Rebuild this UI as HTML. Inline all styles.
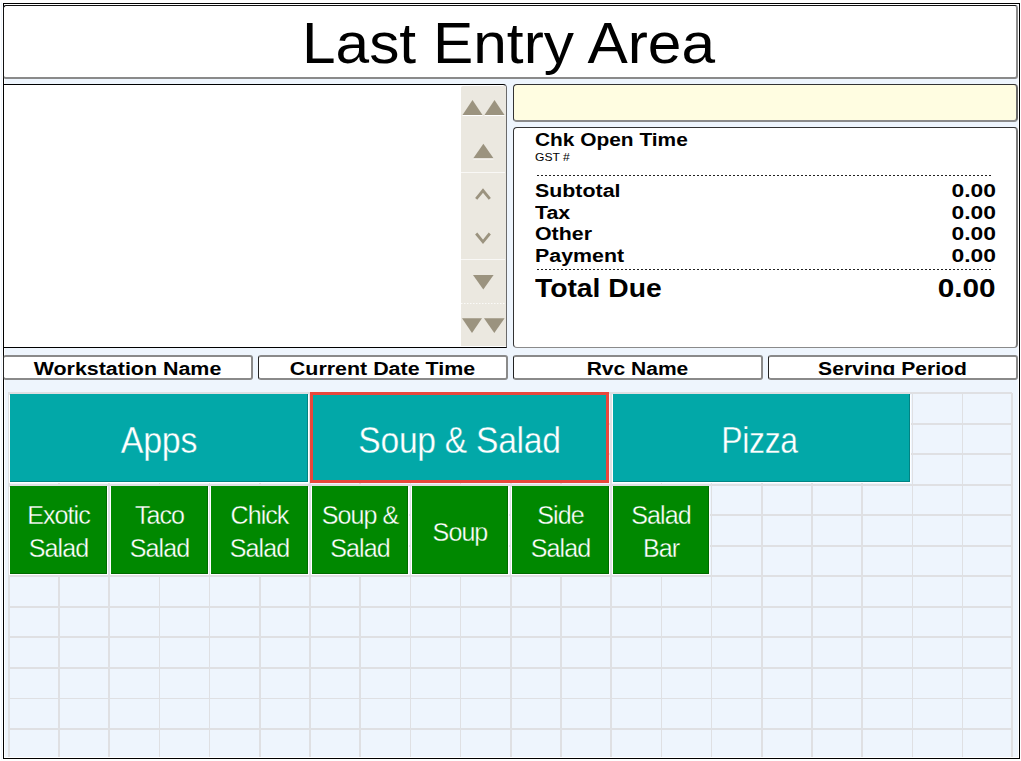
<!DOCTYPE html>
<html><head><meta charset="utf-8">
<style>
html,body{margin:0;padding:0;width:1021px;height:761px;overflow:hidden;background:#fff;}
body{position:relative;font-family:"Liberation Sans",sans-serif;}
.a{position:absolute;box-sizing:border-box;}
.t{position:absolute;white-space:nowrap;}
.gl{position:absolute;background:#dfe0e3;}
.btn{position:absolute;box-shadow:1px 1px 0 #fff,-1px 1px 0 #fff,inset -1px -1px 0 rgba(0,0,0,0.22);overflow:hidden;}
.dot{position:absolute;height:1px;background-image:linear-gradient(to right,#222 0,#222 2px,transparent 2px);background-size:4px 1px;}
</style></head><body>

<div class="a" style="left:3px;top:3px;width:1017px;height:756px;border:1px solid #000;background:#eef5fd;box-shadow:inset 0 0 0 1px #fff;"></div>
<div class="a" style="left:1px;top:2px;width:1px;height:758px;background:#eef5fd;"></div>
<div class="a" style="left:3px;top:5px;width:1015px;height:74px;background:#fff;border-top:1px solid #111;border-left:1px solid #111;border-right:2px solid #8a8a8a;border-bottom:2px solid #8a8a8a;border-radius:3px;"></div>
<div class="t" style="left:0px;top:15.4px;width:1021px;font-size:57px;line-height:57px;transform:scaleX(1.06);transform-origin:50% 0;text-align:center;color:#000;left:-2.0px;">Last Entry Area</div>
<div class="a" style="left:3px;top:84px;width:504px;height:264px;background:#fff;border:1px solid #000;border-right-color:#6a6a6a;border-radius:0 4px 0 0;"></div>
<div class="a" style="left:461px;top:86px;width:45px;height:260px;background:#ebe8e0;border-radius:2px 2px 0 0;"></div>
<svg class="a" style="left:455px;top:80px" width="60" height="280" viewBox="455 80 60 280">
 <g fill="#9b937f">
  <polygon points="462.5,115 472.5,100 482.5,115"/>
  <polygon points="484.5,115 494.5,100 504.5,115"/>
  <polygon points="473.3,158.3 483.4,143.8 493.5,158.3"/>
  <polygon points="473,275 483.3,289.5 493.6,275"/>
  <polygon points="462,318.3 472,333 482,318.3"/>
  <polygon points="484,318.3 494.3,333 504.6,318.3"/>
 </g>
 <g fill="none" stroke="#9b937f" stroke-width="2.8">
  <polyline points="476.2,198.8 483,190.5 489.8,198.8"/>
  <polyline points="476.2,233.5 483,241.8 489.8,233.5"/>
 </g>
 <g stroke="#fff" stroke-width="1">
  <line x1="462.5" y1="115.5" x2="482.5" y2="115.5"/>
  <line x1="484.5" y1="115.5" x2="504.5" y2="115.5"/>
  <line x1="473.3" y1="159" x2="493.5" y2="159" stroke-opacity="0.8"/>
  <line x1="461" y1="172.5" x2="505" y2="172.5" stroke-opacity="0.7"/>
  <line x1="461" y1="259.5" x2="505" y2="259.5" stroke-opacity="0.7"/>
  <line x1="461" y1="303.5" x2="505" y2="303.5" stroke-dasharray="1.5 1.5" stroke-opacity="0.8"/>
 </g>
</svg>
<div class="a" style="left:513px;top:84px;width:505px;height:38px;background:#fffde1;border-top:1px solid #333;border-left:1px solid #333;border-right:2px solid #6a6a6a;border-bottom:2px solid #8a8a8a;border-radius:4px;"></div>
<div class="a" style="left:513px;top:127px;width:505px;height:221px;background:#fff;border-top:1px solid #333;border-left:1px solid #333;border-right:2px solid #7a7a7a;border-bottom:1px solid #8a8a8a;border-radius:4px;"></div>
<div class="t" style="left:535px;top:130.75px;font-size:18px;line-height:18px;font-weight:bold;transform:scaleX(1.16);transform-origin:0 0;text-align:left;color:#000;">Chk Open Time</div>
<div class="t" style="left:535px;top:151.9px;font-size:11px;line-height:11px;transform:scaleX(1.1);transform-origin:0 0;text-align:left;color:#000;">GST #</div>
<div class="t" style="left:535px;top:181.7px;font-size:18px;line-height:18px;font-weight:bold;transform:scaleX(1.187);transform-origin:0 0;text-align:left;color:#000;">Subtotal</div>
<div class="t" style="left:535px;top:203.9px;font-size:18px;line-height:18px;font-weight:bold;transform:scaleX(1.187);transform-origin:0 0;text-align:left;color:#000;">Tax</div>
<div class="t" style="left:535px;top:224.6px;font-size:18px;line-height:18px;font-weight:bold;transform:scaleX(1.187);transform-origin:0 0;text-align:left;color:#000;">Other</div>
<div class="t" style="left:535px;top:246.8px;font-size:18px;line-height:18px;font-weight:bold;transform:scaleX(1.187);transform-origin:0 0;text-align:left;color:#000;">Payment</div>
<div class="t" style="left:535px;top:275.5px;font-size:25px;line-height:25px;font-weight:bold;transform:scaleX(1.13);transform-origin:0 0;text-align:left;color:#000;">Total Due</div>
<div class="t" style="right:25px;top:181.7px;font-size:18px;line-height:18px;font-weight:bold;transform:scaleX(1.27);transform-origin:100% 0;text-align:right;color:#000;">0.00</div>
<div class="t" style="right:25px;top:203.9px;font-size:18px;line-height:18px;font-weight:bold;transform:scaleX(1.27);transform-origin:100% 0;text-align:right;color:#000;">0.00</div>
<div class="t" style="right:25px;top:224.6px;font-size:18px;line-height:18px;font-weight:bold;transform:scaleX(1.27);transform-origin:100% 0;text-align:right;color:#000;">0.00</div>
<div class="t" style="right:25px;top:246.8px;font-size:18px;line-height:18px;font-weight:bold;transform:scaleX(1.27);transform-origin:100% 0;text-align:right;color:#000;">0.00</div>
<div class="t" style="right:25px;top:275.5px;font-size:25px;line-height:25px;font-weight:bold;transform:scaleX(1.19);transform-origin:100% 0;text-align:right;color:#000;">0.00</div>
<div class="dot" style="left:537px;top:175px;width:456px"></div>
<div class="dot" style="left:537px;top:269px;width:456px"></div>
<div class="a" style="left:3px;top:355px;width:250px;height:25px;background:#fff;border-top:2px solid #8a8a8a;border-left:1px solid #222;border-right:2px solid #8a8a8a;border-bottom:2px solid #8a8a8a;border-radius:3px;overflow:hidden;"><div style="position:absolute;left:0;top:0;width:247px;height:18.3px;overflow:hidden"><div class="t" style="left:0px;top:3.0px;width:247px;font-size:18px;line-height:18px;font-weight:bold;transform:scaleX(1.19);transform-origin:50% 0;text-align:center;color:#000;">Workstation Name</div></div></div>
<div class="a" style="left:258px;top:355px;width:250px;height:25px;background:#fff;border-top:2px solid #8a8a8a;border-left:1px solid #222;border-right:2px solid #8a8a8a;border-bottom:2px solid #8a8a8a;border-radius:3px;overflow:hidden;"><div style="position:absolute;left:0;top:0;width:247px;height:18.3px;overflow:hidden"><div class="t" style="left:0px;top:3.0px;width:247px;font-size:18px;line-height:18px;font-weight:bold;transform:scaleX(1.19);transform-origin:50% 0;text-align:center;color:#000;">Current Date Time</div></div></div>
<div class="a" style="left:513px;top:355px;width:250px;height:25px;background:#fff;border-top:2px solid #8a8a8a;border-left:1px solid #222;border-right:2px solid #8a8a8a;border-bottom:2px solid #8a8a8a;border-radius:3px;overflow:hidden;"><div style="position:absolute;left:0;top:0;width:247px;height:18.3px;overflow:hidden"><div class="t" style="left:0px;top:3.0px;width:247px;font-size:18px;line-height:18px;font-weight:bold;transform:scaleX(1.167);transform-origin:50% 0;text-align:center;color:#000;">Rvc Name</div></div></div>
<div class="a" style="left:768px;top:355px;width:250px;height:25px;background:#fff;border-top:2px solid #8a8a8a;border-left:1px solid #222;border-right:2px solid #8a8a8a;border-bottom:2px solid #8a8a8a;border-radius:3px;overflow:hidden;"><div style="position:absolute;left:0;top:0;width:247px;height:18.3px;overflow:hidden"><div class="t" style="left:0px;top:3.0px;width:247px;font-size:18px;line-height:18px;font-weight:bold;transform:scaleX(1.171);transform-origin:50% 0;text-align:center;color:#000;">Serving Period</div></div></div>
<div class="gl" style="left:8.05px;top:392.5px;width:1.6px;height:364.5px"></div>
<div class="gl" style="left:58.25px;top:392.5px;width:1.6px;height:364.5px"></div>
<div class="gl" style="left:108.45px;top:392.5px;width:1.6px;height:364.5px"></div>
<div class="gl" style="left:158.65px;top:392.5px;width:1.6px;height:364.5px"></div>
<div class="gl" style="left:208.85px;top:392.5px;width:1.6px;height:364.5px"></div>
<div class="gl" style="left:259.05px;top:392.5px;width:1.6px;height:364.5px"></div>
<div class="gl" style="left:309.25px;top:392.5px;width:1.6px;height:364.5px"></div>
<div class="gl" style="left:359.45px;top:392.5px;width:1.6px;height:364.5px"></div>
<div class="gl" style="left:409.65px;top:392.5px;width:1.6px;height:364.5px"></div>
<div class="gl" style="left:459.85px;top:392.5px;width:1.6px;height:364.5px"></div>
<div class="gl" style="left:510.05px;top:392.5px;width:1.6px;height:364.5px"></div>
<div class="gl" style="left:560.25px;top:392.5px;width:1.6px;height:364.5px"></div>
<div class="gl" style="left:610.45px;top:392.5px;width:1.6px;height:364.5px"></div>
<div class="gl" style="left:660.65px;top:392.5px;width:1.6px;height:364.5px"></div>
<div class="gl" style="left:710.85px;top:392.5px;width:1.6px;height:364.5px"></div>
<div class="gl" style="left:761.05px;top:392.5px;width:1.6px;height:364.5px"></div>
<div class="gl" style="left:811.25px;top:392.5px;width:1.6px;height:364.5px"></div>
<div class="gl" style="left:861.45px;top:392.5px;width:1.6px;height:364.5px"></div>
<div class="gl" style="left:911.65px;top:392.5px;width:1.6px;height:364.5px"></div>
<div class="gl" style="left:961.85px;top:392.5px;width:1.6px;height:364.5px"></div>
<div class="gl" style="left:1011.20px;top:392.5px;width:1.6px;height:364.5px"></div>
<div class="gl" style="left:8.2px;top:392.30px;width:1004.3px;height:1.8px"></div>
<div class="gl" style="left:8.2px;top:422.82px;width:1004.3px;height:1.8px"></div>
<div class="gl" style="left:8.2px;top:453.34px;width:1004.3px;height:1.8px"></div>
<div class="gl" style="left:8.2px;top:483.86px;width:1004.3px;height:1.8px"></div>
<div class="gl" style="left:8.2px;top:514.38px;width:1004.3px;height:1.8px"></div>
<div class="gl" style="left:8.2px;top:544.90px;width:1004.3px;height:1.8px"></div>
<div class="gl" style="left:8.2px;top:575.42px;width:1004.3px;height:1.8px"></div>
<div class="gl" style="left:8.2px;top:605.94px;width:1004.3px;height:1.8px"></div>
<div class="gl" style="left:8.2px;top:636.46px;width:1004.3px;height:1.8px"></div>
<div class="gl" style="left:8.2px;top:666.98px;width:1004.3px;height:1.8px"></div>
<div class="gl" style="left:8.2px;top:697.50px;width:1004.3px;height:1.8px"></div>
<div class="gl" style="left:8.2px;top:728.02px;width:1004.3px;height:1.8px"></div>
<div class="btn" style="left:10px;top:394px;width:298px;height:88px;background:#02a8a8;"><div class="t" style="left:0px;top:28.8px;width:298px;font-size:36px;line-height:36px;transform:scaleX(0.943);transform-origin:50% 0;text-align:center;color:#fff;-webkit-text-stroke:0.35px #02a8a8;letter-spacing:-0.3px;">Apps</div></div>
<div class="btn" style="left:613px;top:394px;width:297px;height:88px;background:#02a8a8;"><div class="t" style="left:0px;top:28.8px;width:297px;font-size:36px;line-height:36px;transform:scaleX(0.886);transform-origin:50% 0;text-align:center;color:#fff;-webkit-text-stroke:0.35px #02a8a8;letter-spacing:-0.3px;margin-left:-2.5px;">Pizza</div></div>
<div class="btn" style="left:310px;top:392px;width:299px;height:91px;background:#02a8a8;box-sizing:border-box;border:3px solid #e8473c;box-shadow:none"><div class="t" style="left:-3px;top:28.400000000000002px;width:299px;font-size:36px;line-height:36px;transform:scaleX(0.934);transform-origin:50% 0;text-align:center;color:#fff;-webkit-text-stroke:0.35px #02a8a8;letter-spacing:-0.3px;">Soup &amp; Salad</div></div>
<div class="btn" style="left:10px;top:486px;width:97px;height:88px;background:#008800;"><div class="t" style="left:0px;top:13.0px;width:97px;font-size:26px;line-height:32.6px;transform:scaleX(0.965);transform-origin:50% 0;text-align:center;color:#fff;-webkit-text-stroke:0.35px #008800;letter-spacing:-1.0px;">Exotic<br>Salad</div></div>
<div class="btn" style="left:111px;top:486px;width:97px;height:88px;background:#008800;"><div class="t" style="left:0px;top:13.0px;width:97px;font-size:26px;line-height:32.6px;transform:scaleX(0.965);transform-origin:50% 0;text-align:center;color:#fff;-webkit-text-stroke:0.35px #008800;letter-spacing:-1.0px;">Taco<br>Salad</div></div>
<div class="btn" style="left:211px;top:486px;width:97px;height:88px;background:#008800;"><div class="t" style="left:0px;top:13.0px;width:97px;font-size:26px;line-height:32.6px;transform:scaleX(0.965);transform-origin:50% 0;text-align:center;color:#fff;-webkit-text-stroke:0.35px #008800;letter-spacing:-1.0px;">Chick<br>Salad</div></div>
<div class="btn" style="left:312px;top:486px;width:96px;height:88px;background:#008800;"><div class="t" style="left:0px;top:13.0px;width:96px;font-size:26px;line-height:32.6px;transform:scaleX(0.965);transform-origin:50% 0;text-align:center;color:#fff;-webkit-text-stroke:0.35px #008800;letter-spacing:-1.0px;">Soup &amp;<br>Salad</div></div>
<div class="btn" style="left:412px;top:486px;width:96px;height:88px;background:#008800;"><div class="t" style="left:0px;top:30.2px;width:96px;font-size:26px;line-height:32.6px;transform:scaleX(0.965);transform-origin:50% 0;text-align:center;color:#fff;-webkit-text-stroke:0.35px #008800;letter-spacing:-1.0px;">Soup</div></div>
<div class="btn" style="left:512px;top:486px;width:97px;height:88px;background:#008800;"><div class="t" style="left:0px;top:13.0px;width:97px;font-size:26px;line-height:32.6px;transform:scaleX(0.965);transform-origin:50% 0;text-align:center;color:#fff;-webkit-text-stroke:0.35px #008800;letter-spacing:-1.0px;">Side<br>Salad</div></div>
<div class="btn" style="left:613px;top:486px;width:96px;height:88px;background:#008800;"><div class="t" style="left:0px;top:13.0px;width:96px;font-size:26px;line-height:32.6px;transform:scaleX(0.965);transform-origin:50% 0;text-align:center;color:#fff;-webkit-text-stroke:0.35px #008800;letter-spacing:-1.0px;">Salad<br>Bar</div></div>
</body></html>
